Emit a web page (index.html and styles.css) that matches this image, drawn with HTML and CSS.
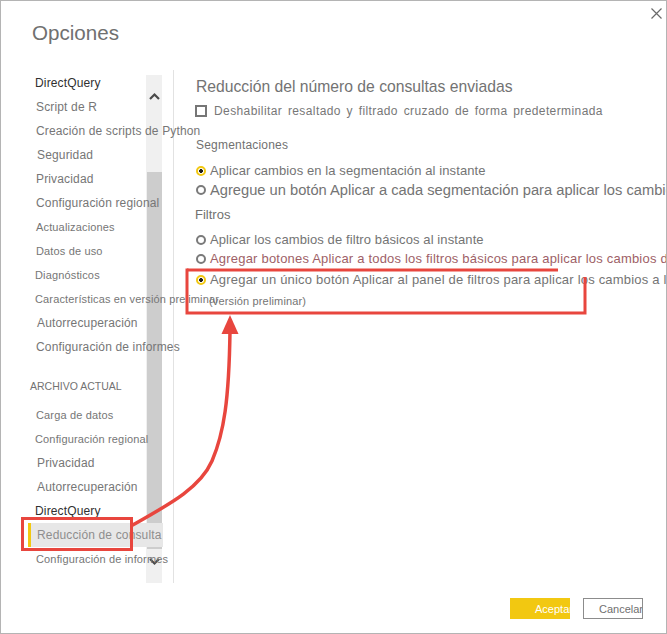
FILE: index.html
```html
<!DOCTYPE html>
<html lang="es">
<head>
<meta charset="utf-8">
<title>Opciones</title>
<link rel="stylesheet" href="styles.css">
</head>
<body>
<div class="dialog">
  <header class="header">
    <h1 class="title">Opciones</h1>
    <button class="close" aria-label="Cerrar">
      <svg width="11" height="11" viewBox="0 0 11 11"><path d="M0.5 0.5 L10.5 10.5 M10.5 0.5 L0.5 10.5" stroke="#6a6a6a" stroke-width="1.2" fill="none"/></svg>
    </button>
  </header>

  <div class="main">
    <nav class="nav">
      <div class="nav-item dark x35">DirectQuery</div>
      <div class="nav-item">Script de R</div>
      <div class="nav-item">Creación de scripts de Python</div>
      <div class="nav-item x37">Seguridad</div>
      <div class="nav-item">Privacidad</div>
      <div class="nav-item">Configuración regional</div>
      <div class="nav-item sm">Actualizaciones</div>
      <div class="nav-item sm">Datos de uso</div>
      <div class="nav-item sm x35">Diagnósticos</div>
      <div class="nav-item sm x35">Características en versión preliminar</div>
      <div class="nav-item x37">Autorrecuperación</div>
      <div class="nav-item">Configuración de informes</div>

      <div class="nav-section">ARCHIVO ACTUAL</div>
      <div class="nav-item sm">Carga de datos</div>
      <div class="nav-item sm x35">Configuración regional</div>
      <div class="nav-item x37">Privacidad</div>
      <div class="nav-item x37">Autorrecuperación</div>
      <div class="nav-item dark x35">DirectQuery</div>
      <div class="nav-item selected">Reducción de consulta</div>
      <div class="nav-item sm">Configuración de informes</div>
    </nav>

    <div class="scrollbar">
      <div class="sb-top">
        <svg width="16" height="30" viewBox="0 0 16 30"><path d="M4 24 L8.5 19.5 L13 24" stroke="#4a4a4a" stroke-width="2.2" fill="none"/></svg>
      </div>
      <div class="sb-thumb"></div>
      <div class="sb-bottom">
        <svg width="16" height="20" viewBox="0 0 16 20"><path d="M4 10 L8.5 14.5 L13 10" stroke="#4a4a4a" stroke-width="2.2" fill="none"/></svg>
      </div>
    </div>

    <div class="divider"></div>

    <section class="content">
      <h2 class="content-title">Reducción del número de consultas enviadas</h2>
      <label class="check-row"><span class="checkbox"></span><span class="check-label">Deshabilitar resaltado y filtrado cruzado de forma predeterminada</span></label>

      <div class="group-label">Segmentaciones</div>
      <div class="radio-row first"><span class="radio on"></span><span class="radio-label">Aplicar cambios en la segmentación al instante</span></div>
      <div class="radio-row"><span class="radio"></span><span class="radio-label big">Agregue un botón Aplicar a cada segmentación para aplicar los cambios</span></div>

      <div class="group-label filters">Filtros</div>
      <div class="radio-row first-f"><span class="radio"></span><span class="radio-label">Aplicar los cambios de filtro básicos al instante</span></div>
      <div class="radio-row"><span class="radio"></span><span class="radio-label wide accent">Agregar botones Aplicar a todos los filtros básicos para aplicar los cambios de forma</span></div>
      <div class="radio-row last"><span class="radio on"></span><span class="radio-label wide">Agregar un único botón Aplicar al panel de filtros para aplicar los cambios a la vez</span></div>
      <div class="preview-note">(versión preliminar)</div>
    </section>
  </div>

  <footer class="footer">
    <button class="btn primary">Aceptar</button>
    <button class="btn secondary">Cancelar</button>
  </footer>

  <svg class="annotations" width="667" height="634" viewBox="0 0 667 634">
    <g stroke="#e8463e" stroke-width="3" fill="none">
      <path d="M187 270 H558"/>
      <path d="M585 277 V313 H187 V268.5"/>
      <rect x="22.5" y="518.5" width="109" height="31"/>
      <path d="M131 526 C170 504 200 488 212 461 C224 433 229 400 230 331" stroke-width="3.5"/>
    </g>
    <polygon points="230,315 238.5,334 221.5,334" fill="#e8463e"/>
  </svg>
</div>
</body>
</html>
```

FILE: styles.css
```css
* { box-sizing: border-box; }

html, body {
  margin: 0;
  padding: 0;
  background: #ffffff;
}

.dialog {
  position: relative;
  width: 667px;
  height: 634px;
  outline: 1px solid #b4b4b4;
  outline-offset: -1px;
  font-family: "Liberation Sans", Arial, sans-serif;
  color: #777777;
  display: flex;
  flex-direction: column;
  overflow: hidden;
  background: #fff;
}

/* header */
.header {
  height: 70px;
  flex: none;
  display: flex;
  justify-content: space-between;
  align-items: flex-start;
  padding-left: 32px;
  padding-right: 4px;
}

.title {
  margin: 21px 0 0 0;
  font-size: 20.6px;
  line-height: 24px;
  font-weight: normal;
  color: #707070;
}

.close {
  margin-top: 8px;
  padding: 0;
  border: 0;
  background: transparent;
  width: 12px;
  height: 12px;
  display: flex;
}

/* main area */
.main {
  height: 513px;
  flex: none;
  display: flex;
}

.nav {
  position: relative;
  z-index: 1;
  width: 146px;
  flex: none;
  display: flex;
  flex-direction: column;
  padding-top: 1px;
  letter-spacing: 0.15px;
}

.nav-item {
  height: 24px;
  line-height: 24px;
  font-size: 12px;
  padding-left: 36px;
  white-space: nowrap;
  color: #767676;
}

.nav-item.sm { font-size: 11px; }
.nav-item.x35 { padding-left: 35px; }
.nav-item.x37 { padding-left: 37px; }
.nav-item.dark { color: #303030; }

.nav-item.selected {
  margin-left: 28px;
  width: 135px;
  padding-left: 6px;
  border-left: 3px solid #f2c811;
  background: #e7e7e7;
  color: #8e8e8e;
}

.nav-section {
  margin-top: 15px;
  margin-bottom: 5px;
  height: 24px;
  line-height: 24px;
  padding-left: 30px;
  font-size: 10.5px;
  color: #727272;
  letter-spacing: 0;
}

/* scrollbar */
.scrollbar {
  width: 16px;
  flex: none;
  margin-top: 5px;
  height: 508px;
  background: #f0f0f0;
  display: flex;
  flex-direction: column;
}

.sb-top { height: 97px; }
.sb-thumb {
  height: 377px;
  margin-left: 1px;
  background: #cdcdcd;
}
.sb-bottom { height: 34px; }

.divider {
  width: 1px;
  flex: none;
  margin-left: 11px;
  background: #e2e2e2;
}

/* content */
.content {
  flex: 1;
  min-width: 0;
  overflow: hidden;
  padding-left: 22px;
  padding-top: 1px;
  white-space: nowrap;
}

.content-title {
  margin: 6px 0 0 0;
  font-size: 15.7px;
  line-height: 20px;
  font-weight: normal;
  color: #737373;
}

.check-row {
  margin-top: 4px;
  height: 20px;
  display: flex;
  align-items: center;
  gap: 7px;
}

.checkbox {
  width: 12px;
  height: 12px;
  margin-left: -1px;
  border: 2px solid #767676;
  flex: none;
}

.check-label {
  font-size: 12px;
  letter-spacing: 0.4px;
  word-spacing: 2px;
  color: #777777;
}

.group-label {
  margin-top: 14px;
  line-height: 20px;
  font-size: 12px;
  letter-spacing: 0.2px;
  color: #717171;
}

.group-label.filters {
  margin-top: 6px;
  font-size: 13px;
  margin-left: -1px;
  letter-spacing: 0;
}

.radio-row {
  height: 19px;
  display: flex;
  align-items: center;
  gap: 4px;
}

.radio-row.first { margin-top: 6px; }
.radio-row.first-f { margin-top: 5px; }
.radio-row.last { margin-top: 2px; }

.radio {
  width: 10px;
  height: 10px;
  flex: none;
  border-radius: 50%;
  border: 2px solid #7a7a7a;
  background: #fff;
}

.radio.on {
  border-color: #f2c811;
  background: radial-gradient(circle, #1e1e1e 0 1.6px, #ffffff 2.2px);
}

.radio-label {
  font-size: 13px;
  letter-spacing: 0.1px;
  color: #747474;
}

.radio-label.big {
  font-size: 14.7px;
  letter-spacing: 0;
}

.radio-label.wide {
  letter-spacing: 0.2px;
}

.radio-label.accent {
  color: #9e5f67;
}

.preview-note {
  margin-top: 2px;
  line-height: 20px;
  padding-left: 13px;
  font-size: 11px;
  letter-spacing: 0.15px;
  color: #747474;
}

/* footer */
.footer {
  flex: 1;
  display: flex;
  justify-content: flex-end;
  align-items: flex-start;
  gap: 13px;
  padding-top: 15px;
  padding-right: 24px;
}

.btn {
  width: 60px;
  height: 21px;
  margin: 0;
  font-family: "Liberation Sans", Arial, sans-serif;
  font-size: 11px;
  text-align: left;
  white-space: nowrap;
  overflow: hidden;
  cursor: pointer;
}

.btn.primary {
  background: #f2c811;
  border: 0;
  color: #ffffff;
  padding: 0 0 0 25px;
}

.btn.secondary {
  background: #ffffff;
  border: 1px solid #8c8c8c;
  color: #707070;
  padding: 0 0 0 15px;
}

/* annotation overlay */
.annotations {
  position: absolute;
  left: 0;
  top: 0;
  pointer-events: none;
  z-index: 5;
}
```
